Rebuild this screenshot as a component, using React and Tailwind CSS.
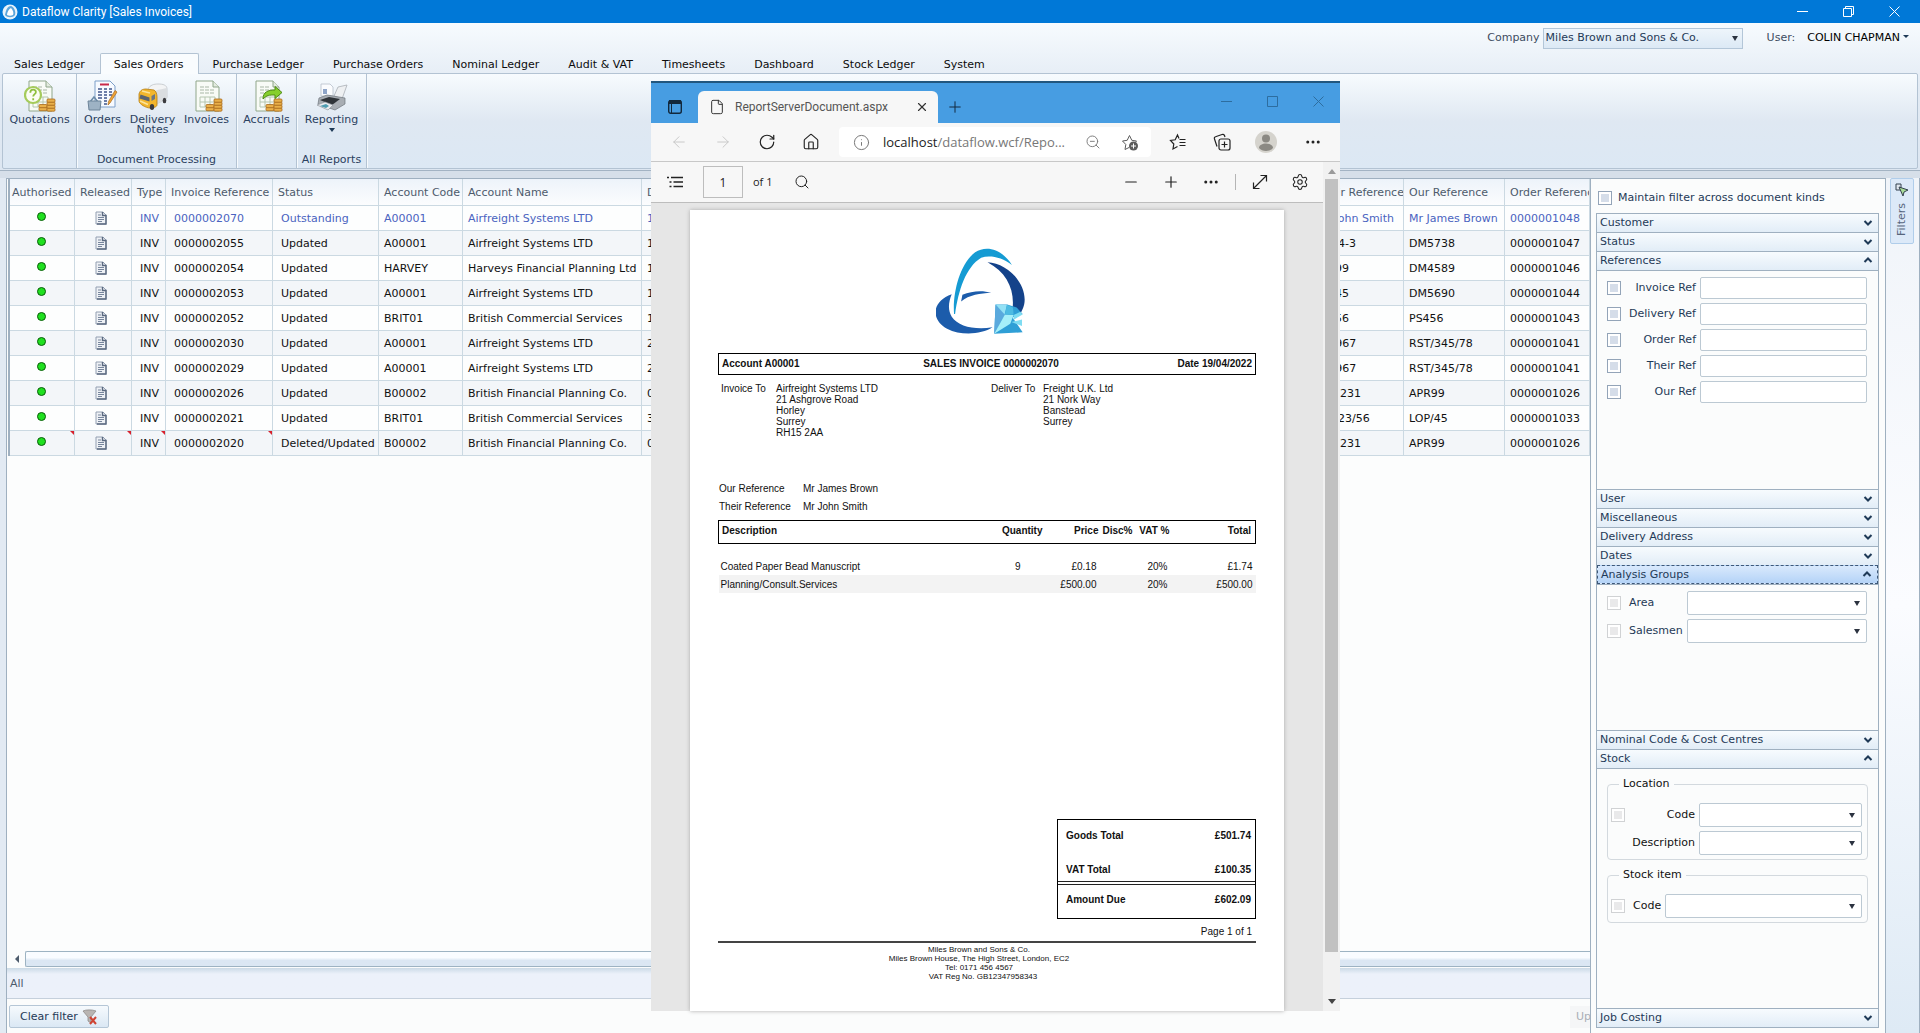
import { useState } from "react";
import {
  ArrowLeft,
  ArrowRight,
  RotateCw,
  House,
  Info,
  ZoomOut,
  Search,
  Minus,
  Plus,
  Settings,
  X,
  File,
  Ellipsis,
} from "lucide-react";

const tabs = [
  "Sales Ledger",
  "Sales Orders",
  "Purchase Ledger",
  "Purchase Orders",
  "Nominal Ledger",
  "Audit & VAT",
  "Timesheets",
  "Dashboard",
  "Stock Ledger",
  "System",
];

const invoices = [
  { ref: "0000002070", status: "Outstanding", code: "A00001", name: "Airfreight Systems LTD", date: "1", their: "Mr John Smith", our: "Mr James Brown", order: "0000001048" },
  { ref: "0000002055", status: "Updated", code: "A00001", name: "Airfreight Systems LTD", date: "1", their: "1244-3", our: "DM5738", order: "0000001047" },
  { ref: "0000002054", status: "Updated", code: "HARVEY", name: "Harveys Financial Planning Ltd", date: "1", their: "DM99", our: "DM4589", order: "0000001046" },
  { ref: "0000002053", status: "Updated", code: "A00001", name: "Airfreight Systems LTD", date: "1", their: "DM45", our: "DM5690", order: "0000001044" },
  { ref: "0000002052", status: "Updated", code: "BRIT01", name: "British Commercial Services", date: "1", their: "DM56", our: "PS456", order: "0000001043" },
  { ref: "0000002030", status: "Updated", code: "A00001", name: "Airfreight Systems LTD", date: "2", their: "RS/967", our: "RST/345/78", order: "0000001041" },
  { ref: "0000002029", status: "Updated", code: "A00001", name: "Airfreight Systems LTD", date: "2", their: "RS/967", our: "RST/345/78", order: "0000001041" },
  { ref: "0000002026", status: "Updated", code: "B00002", name: "British Financial Planning Co.", date: "0", their: "DR0231", our: "APR99", order: "0000001026" },
  { ref: "0000002021", status: "Updated", code: "BRIT01", name: "British Commercial Services", date: "3", their: "LOP23/56", our: "LOP/45", order: "0000001033" },
  { ref: "0000002020", status: "Deleted/Updated", code: "B00002", name: "British Financial Planning Co.", date: "0", their: "DR0231", our: "APR99", order: "0000001026", flagged: true },
];

/* ---------- icons ---------- */

function AppLogo() {
  return (
    <svg className="w-4 h-4" viewBox="0 0 16 16">
      <circle cx="8" cy="8" r="7.5" fill="#e8f3fb" />
      <path d="M3 11C4 5 6 2 9 2c3 1 5 5 4 9-2 3-8 3-10 0z" fill="#5aa5dc" />
      <path d="M5 11C5 8 7 5 9 4c2 2 3 5 2 7-2 1-4 1-6 0z" fill="#fff" />
    </svg>
  );
}

function Sheet() {
  return (
    <>
      <path d="M5 1h17l6 6v24H5z" fill="#f8fbf6" stroke="#8fa68a" />
      <path d="M22 1v6h6" fill="#e3ebdf" stroke="#8fa68a" />
      <path d="M9 7h9M9 10h14M9 13h15" stroke="#a9b7a6" strokeDasharray="4 1" />
      <path d="M9 17h15v10H9zM9 22h15M14 17v10M19 17v10" fill="none" stroke="#b5c6b0" />
    </>
  );
}

function Coins() {
  return (
    <g fill="#e9b04a" stroke="#a8691c" strokeWidth=".8">
      <rect x="15" y="27.5" width="8" height="3.2" rx="1" />
      <rect x="15" y="24.5" width="8" height="3.2" rx="1" />
      <rect x="23" y="28" width="8" height="3.2" rx="1" />
      <rect x="23" y="25" width="8" height="3.2" rx="1" />
      <rect x="23" y="22" width="8" height="3.2" rx="1" />
      <rect x="23" y="19" width="8" height="3.2" rx="1" />
    </g>
  );
}

function RibbonIcon({ kind }) {
  return (
    <svg className="w-8 h-8" viewBox="0 0 32 32">
      {kind === "quotations" && (
        <>
          <Sheet />
          <Coins />
          <circle cx="9" cy="15" r="8" fill="#fbfdf4" stroke="#a5cb5b" strokeWidth="2.2" />
          <path d="M6.3 12.8c0-4 5.600-4 5.600-.7 0 2-2.700 2.200-2.700 4.500M9.200 18.200v2" fill="none" stroke="#8fbf3f" strokeWidth="1.800" />
        </>
      )}
      {kind === "orders" && (
        <>
          <path d="M8 1h15l5 5v21H8z" fill="#f7faff" stroke="#7d9fc9" />
          <path d="M13 4.500h9" stroke="#c8284a" strokeWidth="2" />
          <path d="M11 9h4M11 12h4M11 15h4M11 18h4M17 9h3M17 12h3M17 15h3M17 18h3M17 21h3M17 24h3M22 9h3M22 12h3M22 15h3" stroke="#40558c" strokeWidth="1.500" />
          <path d="M30 12l-7 11-2 2 .5-3.500 6.500-11z" fill="#f0a436" stroke="#a86a20" strokeWidth=".7" />
          <path d="M3 22l4-5 4 5" fill="none" stroke="#6b8ba8" strokeWidth="1.500" />
          <path d="M1 21h13l-1 9H2z" fill="#9db2c4" stroke="#6d8499" />
        </>
      )}
      {kind === "delivery" && (
        <>
          <path d="M11 9c2-4 6-5 10-5 5 0 9 1 9 5v8c0 3-7 5-11 7l-8-8z" fill="#f3f4f5" stroke="#b9bdc1" strokeWidth=".7" />
          <path d="M18 11c4-2 9-2 12-3v9c0 3-7 5-11 7z" fill="#dadde0" />
          <path d="M2 14c1-4 4-5 7-5l8 1c2 1 3 4 3 7v8c0 2-4 3-7 3-4 0-11-4-11-7z" fill="#f3b62c" stroke="#b57c12" strokeWidth=".8" />
          <path d="M3.500 14.500l9 3v4l-10-3z" fill="#5b6470" />
          <path d="M14.500 16l3.500-2v5l-3.500 2z" fill="#6c7683" />
          <path d="M5 11l8 2" stroke="#fbe39a" strokeWidth="1.500" />
          <ellipse cx="15" cy="27" rx="2.200" ry="3" fill="#3b3b3f" />
          <ellipse cx="27.500" cy="20.500" rx="1.800" ry="2.800" fill="#3b3b3f" />
          <path d="M3 21l8 3.500" stroke="#fbe39a" strokeWidth="1.500" />
        </>
      )}
      {kind === "invoices" && (
        <>
          <Sheet />
          <Coins />
        </>
      )}
      {kind === "accruals" && (
        <>
          <Sheet />
          <Coins />
          <path d="M12 19c0-7 5-9 12-9V6.500l7 6-7 6V15c-6 0-8 0-12 4z" fill="#86cf2c" stroke="#4d8a14" />
        </>
      )}
      {kind === "reporting" && (
        <>
          <path d="M5 4h9l3 3v9H5z" fill="#fbfcfe" stroke="#b7bfca" strokeWidth=".8" />
          <path d="M7 9h4v5H7z" fill="#8fa5c8" />
          <path d="M22 7l9-2-5 14-8-3z" fill="#eef0f2" stroke="#a9aeb5" strokeWidth=".8" />
          <path d="M3 18l8-3 18 3v6l-10 6L2 24z" fill="#a8adb3" stroke="#6f757c" strokeWidth=".7" />
          <path d="M4 20l9-3 11 2-8 6z" fill="#2f3338" />
          <path d="M1 25l8-3 8 3-5 5z" fill="#e9ebee" stroke="#90969d" strokeWidth=".7" />
          <path d="M4 26l6-2 3 2-3 2z" fill="#4f9cb0" />
        </>
      )}
    </svg>
  );
}

function RowDocIcon() {
  return (
    <svg className="w-3 h-4 inline-block" viewBox="0 0 12 16">
      <path d="M1 2h7l3 3v9H1z" fill="#eef1f5" stroke="#93a0b2" />
      <path d="M7.500 2v3.500H11V14H2" fill="none" stroke="#5b6a80" strokeWidth="1.400" />
      <path d="M3 5h3M3 7.500h6M3 9.500h6M3 11.500h4" stroke="#76859c" />
    </svg>
  );
}

function CompanyMark() {
  return (
    <svg className="w-[89px] h-[86px]" viewBox="33 23 266 259" preserveAspectRatio="none">
      <path d="M87 222C82 160 104 70 150 36c32-22 78-12 110 38-30-24-66-30-92-22C122 80 100 150 90 222z" fill="#159bd3" />
      <path d="M187 66c52 2 110 52 111 112 0 20-8 34-16 48l-20-22c6-56-18-108-75-138z" fill="#14428a" />
      <path d="M80 162c-62 22-62 78-14 104 42 22 102 18 136-4-54 8-102-2-122-32-12-20-10-44 0-68z" fill="#1c5cab" />
      <path d="M112 164c28-12 60-14 86-6-32 2-66 6-90 26z" fill="#1c5cab" />
      <path d="M211 193l-4 88 85-4-30-45 30-10-18-20-28-9z" fill="#2f9fd6" />
      <path d="M211 193l28 30-32 58z" fill="#5aa9dd" />
      <path d="M211 193l34 2-7 28z" fill="#93e1f5" />
      <path d="M239 223l26 2-10 26-48 30z" fill="#a5eff9" />
      <path d="M245 194l18 8 2 22-26-1z" fill="#4dbbe2" />
      <path d="M265 225l20-10 7 8-27 16zM258 246l32-8v20z" fill="#7edcf2" />
    </svg>
  );
}

function Caret() {
  return <span className="border-x-[3px] border-x-transparent border-t-[5px] border-t-[#2c3340]" />;
}

/* ---------- small controls ---------- */

function Check({ id, disabled, label }) {
  return (
    <input
      id={id}
      type="checkbox"
      aria-label={label}
      disabled={disabled}
      className={
        "appearance-none w-[14px] h-[14px] shrink-0 border shadow-[inset_0_0_0_2px_white] checked:bg-[#5b86c4] " +
        (disabled ? "border-[#d0d2d4] bg-[#e9e9ea]" : "border-[#93a4b8] bg-[#d5dde9]")
      }
    />
  );
}

function Combo({ id, label, className }) {
  return (
    <div className={"relative flex items-center " + className}>
      <select
        id={id}
        aria-label={label}
        className="appearance-none w-full h-6 border border-[#bcc9d3] rounded-xs bg-white px-1"
      >
        <option></option>
      </select>
      <span className="absolute right-[7px] flex pointer-events-none">
        <Caret />
      </span>
    </div>
  );
}

function Section({ title, open, active, className = "", children }) {
  return (
    <div className={"flex flex-col " + className}>
      <button
        className={
          "flex items-center justify-between h-[19px] w-full shrink-0 pl-[3px] pr-[5px] text-left text-[#1f3a57] " +
          (active
            ? "border border-dashed border-[#3e5878] bg-linear-to-b from-[#d9e9fc] to-[#b4d3f7]"
            : "border-t border-[#9fb0c0] bg-linear-to-b from-[#f7fbfe] to-[#e2edf7]")
        }
      >
        {title}
        <svg className="w-[10px] h-[10px]" viewBox="0 0 10 10">
          <path d={open ? "M1.500 6L5 2.500 8.500 6" : "M1.500 3L5 6.500 8.500 3"} fill="none" stroke="#1f3a57" strokeWidth="2" />
        </svg>
      </button>
      {open && <div className="flex-1 border-t border-[#9fb0c0] bg-[#fbfcfc]">{children}</div>}
    </div>
  );
}

/* ---------- main window parts ---------- */

function TitleBar() {
  return (
    <div className="h-[23px] bg-[#0078d7] text-white flex items-center pl-[2px] pr-5 gap-1">
      <AppLogo />
      <h1 className="flex-1 text-[12px] font-[Roboto,sans-serif]">Dataflow Clarity [Sales Invoices]</h1>
      <div className="flex items-center gap-[35px]">
        <button aria-label="Minimise">
          <svg className="w-[11px] h-[11px]" viewBox="0 0 11 11"><path d="M0 5.500h11" stroke="#fff" /></svg>
        </button>
        <button aria-label="Restore">
          <svg className="w-[11px] h-[11px]" viewBox="0 0 11 11"><path d="M.5 2.500h8v8h-8zM2.500 2.500v-2h8v8h-2" fill="none" stroke="#fff" /></svg>
        </button>
        <button aria-label="Close">
          <svg className="w-[11px] h-[11px]" viewBox="0 0 11 11"><path d="M.5.5l10 10M10.500.5l-10 10" stroke="#fff" /></svg>
        </button>
      </div>
    </div>
  );
}

function RibbonButton({ kind, label, drop, className = "w-14" }) {
  return (
    <button className={"flex flex-col items-center leading-[10px] text-[#2b4160] " + className}>
      <RibbonIcon kind={kind} />
      <span className="pt-[3px]">{label}</span>
      {drop && <span className="mt-[3px] border-x-[3px] border-x-transparent border-t-4 border-t-[#1f3a57]" />}
    </button>
  );
}

function RibbonGroup({ caption, className, children }) {
  return (
    <div className={"flex flex-col items-center pt-[6px] border-r border-[#b3c3d3] shadow-[1px_0_0_#f6fafd] " + className}>
      <div className="flex-1 flex items-start justify-center">{children}</div>
      <span className="h-4 leading-4 whitespace-nowrap text-[#2b4160]">{caption}</span>
    </div>
  );
}

function Ribbon() {
  const [tab, setTab] = useState("Sales Orders");
  return (
    <header className="bg-linear-to-b from-[#f7fbfe] via-[#e3ebf4] via-40% to-[#dce6f1]">
      <div className="h-[30px] flex items-center justify-end pr-[11px]">
        <label htmlFor="company" className="text-[#3d4c61] pr-[3px]">Company</label>
        <div className="relative flex items-center w-[200px]">
          <select
            id="company"
            className="appearance-none w-full h-[21px] pl-[2px] border border-[#b3c6d8] text-[#1f3a57] bg-linear-to-b from-[#eef5fb] to-[#dce9f5]"
          >
            <option>Miles Brown and Sons &amp; Co.</option>
          </select>
          <span className="absolute right-[5px] flex pointer-events-none"><Caret /></span>
        </div>
        <span className="pl-6 text-[#3d4c61]">User:</span>
        <button className="pl-3 flex items-center gap-[3px] text-black">
          COLIN CHAPMAN
          <span className="border-x-[3px] border-x-transparent border-t-[3px] border-t-[#1f3a57] mb-1" />
        </button>
      </div>
      <nav className="h-5 flex">
        {tabs.map((t) => (
          <button
            key={t}
            onClick={() => setTab(t)}
            className={
              "pl-[13px] pr-[14px] pt-[2px] h-[21px] whitespace-nowrap text-[#0c0c0c] border-x border-t rounded-t-xs " +
              (t === tab ? "bg-[#f9fcfe] border-[#b3c3d3] relative" : "border-transparent")
            }
          >
            {t}
          </button>
        ))}
      </nav>
      <div className="h-24 ml-[2px] mr-[2px] flex border border-[#b3c3d3] rounded-xs bg-linear-to-b from-[#f7fbfe] via-[#dfe8f2] via-50% to-[#dce8f4]">
        <RibbonGroup className="w-[74px]">
          <RibbonButton kind="quotations" label="Quotations" className="w-[70px]" />
        </RibbonGroup>
        <RibbonGroup className="w-40" caption="Document Processing">
          <RibbonButton kind="orders" label="Orders" className="w-12" />
          <RibbonButton kind="delivery" label="Delivery Notes" className="w-[52px]" />
          <RibbonButton kind="invoices" label="Invoices" />
        </RibbonGroup>
        <RibbonGroup className="w-[60px]">
          <RibbonButton kind="accruals" label="Accruals" />
        </RibbonGroup>
        <RibbonGroup className="w-[70px]" caption="All Reports">
          <RibbonButton kind="reporting" label="Reporting" drop />
        </RibbonGroup>
      </div>
      <div className="h-2 mt-px border-t border-[#a3b3c3] bg-[#d6dfe9]" />
    </header>
  );
}

function Th({ className = "", children }) {
  return (
    <th className={"font-normal text-left whitespace-nowrap overflow-hidden pt-[2px] border-r border-b border-[#cbd9e2] " + className}>
      {children}
    </th>
  );
}

function Td({ className = "", flagged, children }) {
  return (
    <td className={"relative whitespace-nowrap overflow-hidden border-r border-b border-[#cbd9e2] " + className}>
      {children}
      {flagged && (
        <span className="absolute top-0 right-0 border-t-4 border-t-[#d8202c] border-l-4 border-l-transparent" />
      )}
    </td>
  );
}

function InvoiceGrid() {
  return (
    <table className="w-full table-fixed border-separate border-spacing-0 border-l-2 border-[#9fb0c0]">
      <colgroup>
        <col className="w-[65px]" />
        <col className="w-[57px]" />
        <col className="w-[34px]" />
        <col className="w-[107px]" />
        <col className="w-[106px]" />
        <col className="w-[84px]" />
        <col className="w-[179px]" />
        <col />
        <col className="w-[92px]" />
        <col className="w-[101px]" />
        <col className="w-[85px]" />
      </colgroup>
      <thead>
        <tr className="h-[27px] text-[#4d5b6c] bg-linear-to-b from-[#edf3fa] to-[#fcfdfe]">
          <Th className="pl-[2px]">Authorised</Th>
          <Th className="pl-[5px]">Released</Th>
          <Th className="pl-[5px]">Type</Th>
          <Th className="pl-[5px]">Invoice Reference</Th>
          <Th className="pl-[5px]">Status</Th>
          <Th className="pl-[5px]">Account Code</Th>
          <Th className="pl-[5px]">Account Name</Th>
          <Th className="pl-[5px]">Date</Th>
          <Th className="pl-[5px]">Their Reference</Th>
          <Th className="pl-[5px]">Our Reference</Th>
          <Th className="pl-[5px]">Order Reference</Th>
        </tr>
      </thead>
      <tbody>
        {invoices.map((inv, i) => (
          <tr
            key={inv.ref}
            className={
              "h-[25px] " +
              (i === 0 ? "text-[#4a63c0] " : "text-[#111] ") +
              (i % 2 ? "bg-[#f3f6f9]" : "bg-[#fdfefe]")
            }
          >
            <Td className="text-center pr-[2px]" flagged={inv.flagged}>
              <span className="inline-block w-[9px] h-[9px] rounded-full bg-[#1fe01f] border border-[#0a5c0a]" />
            </Td>
            <Td className="text-center align-middle pr-[5px]" flagged={inv.flagged}><RowDocIcon /></Td>
            <Td className="pt-[2px] pl-2" flagged={inv.flagged}>INV</Td>
            <Td className="pt-[2px] pl-2" flagged={inv.flagged}>{inv.ref}</Td>
            <Td className="pt-[2px] pl-2">{inv.status}</Td>
            <Td className="pt-[2px] pl-[5px]">{inv.code}</Td>
            <Td className="pt-[2px] pl-[5px]">{inv.name}</Td>
            <Td className="pt-[2px] pl-[5px]">{inv.date}</Td>
            <Td className="pt-[2px] pl-[5px]">{inv.their}</Td>
            <Td className="pt-[2px] pl-[5px]">{inv.our}</Td>
            <Td className="pt-[2px] pl-[5px]">{inv.order}</Td>
          </tr>
        ))}
      </tbody>
    </table>
  );
}

function ListArea() {
  return (
    <section className="flex-1 min-w-0 flex flex-col border-l border-t border-[#9fb0c0] bg-[#fbfcfc]">
      <div className="flex-1 pl-px bg-white/40">
        <InvoiceGrid />
      </div>
      <div className="flex h-[18px] items-center">
        <span className="ml-2 border-y-4 border-y-transparent border-r-4 border-r-[#4d5b6c]" />
        <div className="flex-1 ml-[6px] h-4 border border-r-0 border-[#9db3c2] rounded-l-xs bg-linear-to-b from-[#f9fcff] from-40% to-[#dbe7f3] to-60%" />
      </div>
      <div className="h-[31px] flex items-center pl-[3px] pt-[2px] border-b border-[#c5d0dc] text-[#4d5b6c] bg-linear-to-b from-[#cbdae6] to-[#ecf1fa] to-20%">
        All
      </div>
      <div className="h-[34px] pt-px flex items-center justify-between pl-[2px]">
        <button className="flex items-center gap-1 h-[23px] px-[10px] border border-[#b5c6d6] rounded-xs text-[#1f3a57] bg-linear-to-b from-[#f6fafd] to-[#dbe8f4]">
          Clear filter
          <svg className="w-4 h-4" viewBox="0 0 16 16">
            <path d="M1 2c3-1.500 9-1.500 13 0l-5 6v6l-3-2V8z" fill="#b9b5b2" stroke="#8e8a88" strokeWidth=".8" />
            <path d="M8 8l6 7M14 8l-6 7" stroke="#cf4433" strokeWidth="2" />
          </svg>
        </button>
        <button disabled className="w-5 h-[22px] pl-[6px] overflow-hidden text-left text-[#a9afb6] bg-[#f5f6f7]">
          Up
        </button>
      </div>
    </section>
  );
}

const refFields = ["Invoice Ref", "Delivery Ref", "Order Ref", "Their Ref", "Our Ref"];

function FilterPanel() {
  return (
    <aside className="w-[296px] shrink-0 flex flex-col pl-[5px] pr-[6px] pb-[5px] border-x border-t border-[#9fb0c0] bg-[#fbfcfc] text-[#1f3a57]">
      <label className="h-[34px] pt-[3px] flex items-center gap-[6px] pl-[2px]">
        <Check id="maintain" />
        Maintain filter across document kinds
      </label>
      <div className="flex-1 flex flex-col border-x border-b border-[#9fb0c0]">
        <Section title="Customer" />
        <Section title="Status" />
        <Section title="References" open className="h-[238px]">
          <div className="flex flex-col gap-1 pt-[6px] pl-[10px] pr-[11px]">
            {refFields.map((f) => (
              <div key={f} className="flex items-center">
                <Check label={"Use " + f} />
                <label htmlFor={f} className="w-[75px] text-right">{f}</label>
                <input id={f} type="text" className="flex-1 min-w-0 h-[22px] ml-1 px-1 border border-[#bcc9d3] rounded-xs bg-white" />
              </div>
            ))}
          </div>
        </Section>
        <Section title="User" />
        <Section title="Miscellaneous" />
        <Section title="Delivery Address" />
        <Section title="Dates" />
        <Section title="Analysis Groups" open active className="h-[165px]">
          <div className="flex flex-col gap-1 pt-[6px] pl-[10px] pr-[11px]">
            {["Area", "Salesmen"].map((f) => (
              <div key={f} className="flex items-center">
                <Check disabled label={"Use " + f} />
                <label htmlFor={f} className="w-[58px] ml-2">{f}</label>
                <Combo id={f} className="flex-1" />
              </div>
            ))}
          </div>
        </Section>
        <Section title="Nominal Code & Cost Centres" />
        <Section title="Stock" open className="flex-1">
          <div className="flex flex-col gap-2 pt-2 px-[10px] text-[#111]">
            <fieldset className="border border-[#d3d9de] rounded-sm pl-[3px] pr-[5px] pb-1">
              <legend className="ml-2 px-1">Location</legend>
              <div className="flex flex-col gap-1 pt-3">
                <div className="flex items-center">
                  <Check disabled label="Use location" />
                  <label htmlFor="loc-code" className="w-[70px] text-right">Code</label>
                  <Combo id="loc-code" className="flex-1 ml-1" />
                </div>
                <div className="flex items-center">
                  <label htmlFor="loc-desc" className="w-[84px] text-right">Description</label>
                  <Combo id="loc-desc" className="flex-1 ml-1" />
                </div>
              </div>
            </fieldset>
            <fieldset className="border border-[#d3d9de] rounded-sm pl-[3px] pr-[5px] pb-1">
              <legend className="ml-2 px-1">Stock item</legend>
              <div className="flex items-center pt-3">
                <Check disabled label="Use stock item" />
                <label htmlFor="item-code" className="ml-2">Code</label>
                <Combo id="item-code" className="flex-1 ml-1" />
              </div>
            </fieldset>
          </div>
        </Section>
        <Section title="Job Costing" />
      </div>
    </aside>
  );
}

function SideStrip() {
  return (
    <div className="w-[34px] shrink-0 flex justify-center items-start pr-[2px] border-r border-[#9fb0c0] bg-linear-to-b from-[#f0f4f9] via-[#fbfcff] via-50% to-[#deeaf5]">
      <button className="w-6 h-[66px] pt-1 flex flex-col items-center gap-[6px] border border-[#b0cdea] rounded-xs bg-[#dce9f8] text-[#56657c]">
        <svg className="w-[14px] h-[14px] shrink-0" viewBox="0 0 14 14">
          <path d="M1 1h5v6H1z" fill="#dfe6ee" stroke="#33404f" />
          <path d="M4 4l9 3-4 2-1 4z" fill="#a8dc98" stroke="#33404f" />
        </svg>
        <span className="[writing-mode:vertical-rl] rotate-180">Filters</span>
      </button>
    </div>
  );
}

/* ---------- report window ---------- */

function StarPlus() {
  return (
    <svg className="w-[18px] h-[18px]" viewBox="0 0 18 18" fill="none" stroke="#5c5c5c">
      <path d="M8 14.500l-4 2 .8-5L1.500 8l4.700-.7L8.500 2.500l2.300 4.800 4.700.7-1 1.200" />
      <circle cx="12.500" cy="13" r="4.500" fill="#5c5c5c" stroke="none" />
      <path d="M12.500 10.500v5M10 13h5" stroke="#fff" />
    </svg>
  );
}

function FavouritesIcon() {
  return (
    <svg className="w-[18px] h-[18px]" viewBox="0 0 18 18" fill="none" stroke="#222" strokeWidth="1.200">
      <path d="M10 5.500L8.500 2 6.200 6.800 1.500 7.500l3.300 3.500-.8 5 4.500-2.500M10.500 6.500h6M10.500 9.500h6M10.500 12.500h6" />
    </svg>
  );
}

function CollectionsIcon() {
  return (
    <svg className="w-[18px] h-[18px]" viewBox="0 0 18 18" fill="none" stroke="#222" strokeWidth="1.200">
      <rect x="6" y="6" width="11" height="11" rx="2" />
      <path d="M11.500 8.500v6M8.500 11.500h6M4 13.500L1.500 6c-.3-1 0-2 1-2.300L9 1.500c1-.3 2 0 2.500 1l.5 1.500" />
    </svg>
  );
}

function ContentsIcon() {
  return (
    <svg className="w-[18px] h-[18px]" viewBox="0 0 18 18" stroke="#222" strokeWidth="1.300">
      <path d="M1 4.500h2M5 4.500h12M3.500 9h2M7.500 9H17M3.500 13.500h2M7.500 13.500H17" />
    </svg>
  );
}

function ExpandIcon() {
  return (
    <svg className="w-[18px] h-[18px]" viewBox="0 0 18 18" fill="none" stroke="#222" strokeWidth="1.200">
      <path d="M2.500 15.500l13-13M9.500 2.500h6v6M2.500 9.500v6h6" />
    </svg>
  );
}

function BrowserChrome() {
  return (
    <>
      <div className="h-[42px] shrink-0 flex items-end border-t-2 border-[#22577f] bg-[#479de2]">
        <button aria-label="Tab actions" className="w-[47px] h-8 flex items-center justify-center">
          <svg className="w-[14px] h-[14px]" viewBox="0 0 14 14">
            <rect x=".7" y=".7" width="12.600" height="12.600" rx="2" fill="none" stroke="#12283c" strokeWidth="1.400" />
            <path d="M1 0h12v4H1z" fill="#12283c" />
            <path d="M3.500 4v9" stroke="#12283c" />
          </svg>
        </button>
        <div className="w-60 h-8 flex items-center pl-[11px] pr-[9px] rounded-t-md bg-[#f7f7f7] text-[#555]">
          <File size={16} strokeWidth={1.5} className="text-[#333]" />
          <span className="flex-1 pl-[10px] text-[12px] font-[Roboto,sans-serif]">ReportServerDocument.aspx</span>
          <button aria-label="Close tab"><X size={14} strokeWidth={2} className="text-[#333]" /></button>
        </div>
        <button aria-label="New tab" className="h-8 px-2"><Plus size={18} strokeWidth={1.3} className="text-[#12283c]" /></button>
        <div className="flex-1 flex justify-end items-center gap-[35px] h-10 pb-1 pr-4 text-[#2d6d9f]">
          <button aria-label="Minimise report"><svg className="w-[11px] h-[11px]" viewBox="0 0 11 11"><path d="M0 5.500h11" stroke="currentColor" /></svg></button>
          <button aria-label="Maximise report"><svg className="w-[11px] h-[11px]" viewBox="0 0 11 11"><path d="M.5.500h10v10H.500z" fill="none" stroke="currentColor" /></svg></button>
          <button aria-label="Close report"><svg className="w-[11px] h-[11px]" viewBox="0 0 11 11"><path d="M.5.5l10 10M10.500.5l-10 10" stroke="currentColor" /></svg></button>
        </div>
      </div>
      <div className="h-[38px] shrink-0 flex items-center bg-[#f7f7f7] text-[#222] pl-[19px] pr-[18px]">
        <button aria-label="Back" className="pr-[26px]"><ArrowLeft size={18} strokeWidth={1.2} className="text-[#c4c4c4]" /></button>
        <button aria-label="Forward" className="pr-[26px]"><ArrowRight size={18} strokeWidth={1.2} className="text-[#c4c4c4]" /></button>
        <button aria-label="Refresh" className="pr-[26px]"><RotateCw size={18} strokeWidth={1.6} /></button>
        <button aria-label="Home" className="pr-[19px]"><House size={18} strokeWidth={1.5} /></button>
        <div className="flex-1 h-[30px] flex items-center pl-[14px] pr-3 rounded-sm bg-white text-[#777]">
          <Info size={17} strokeWidth={1.4} />
          <span className="flex-1 pl-[13px] text-[13px] whitespace-nowrap"><span className="text-[#222]">localhost</span>/dataflow.wcf/Repo...</span>
          <ZoomOut size={16} strokeWidth={1.4} />
          <span className="pl-5"><StarPlus /></span>
        </div>
        <button aria-label="Favourites" className="pl-[18px]"><FavouritesIcon /></button>
        <button aria-label="Collections" className="pl-[26px]"><CollectionsIcon /></button>
        <button aria-label="Profile" className="pl-6">
          <svg className="w-[22px] h-[22px]" viewBox="0 0 22 22">
            <circle cx="11" cy="11" r="11" fill="#d5d3cd" />
            <circle cx="11" cy="7.500" r="4" fill="#8b8983" />
            <path d="M4 17c0-6 14-6 14 0-3 4-11 4-14 0z" fill="#8b8983" />
          </svg>
        </button>
        <button aria-label="Browser menu" className="pl-[27px]"><Ellipsis size={18} /></button>
      </div>
    </>
  );
}

function InvoicePage() {
  const rows = [
    ["Coated Paper Bead Manuscript", "9", "£0.18", "", "20%", "£1.74"],
    ["Planning/Consult.Services", "", "£500.00", "", "20%", "£500.00"],
  ];
  return (
    <article className="w-[594px] shrink-0 h-full px-7 bg-white shadow-[0_0_4px_#aaa] text-[10px] leading-[11px] text-[#111] font-['Liberation_Sans',Arial,sans-serif] flex flex-col overflow-hidden">
      <div className="pt-[38px] pl-[218px]"><CompanyMark /></div>
      <h2 className="mt-[19px] h-[22px] pb-px flex items-center justify-between px-[3px] border border-black font-bold">
        <span className="w-40">Account A00001</span>
        <span className="pl-2">SALES INVOICE 0000002070</span>
        <span className="w-40 text-right">Date 19/04/2022</span>
      </h2>
      <div className="flex mt-2 h-[94px]">
        <div className="w-[55px] pl-[3px]">Invoice To</div>
        <address className="not-italic w-[215px] pl-[3px]">
          Airfreight Systems LTD<br />21 Ashgrove Road<br />Horley<br />Surrey<br />RH15 2AA
        </address>
        <div className="w-[52px] pl-[3px]">Deliver To</div>
        <address className="not-italic pl-[3px]">
          Freight U.K. Ltd<br />21 Nork Way<br />Banstead<br />Surrey
        </address>
      </div>
      <dl className="grid grid-cols-[84px_1fr] gap-y-[7px] mt-[6px] pl-px">
        <dt>Our Reference</dt>
        <dd>Mr James Brown</dd>
        <dt>Their Reference</dt>
        <dd>Mr John Smith</dd>
      </dl>
      <table className="w-full table-fixed border-collapse mt-2">
        <colgroup>
          <col />
          <col className="w-[66px]" />
          <col className="w-[56px]" />
          <col className="w-[34px]" />
          <col className="w-[37px]" />
          <col className="w-[84px]" />
        </colgroup>
        <thead>
          <tr className="h-[23px] border border-black text-right whitespace-nowrap">
            <th className="text-left pl-[3px] pb-[3px]">Description</th>
            <th className="pr-[2px] pb-[3px]">Quantity</th>
            <th className="pr-[2px] pb-[3px]">Price</th>
            <th className="pr-[2px] pb-[3px]">Disc%</th>
            <th className="pr-[2px] pb-[3px]">VAT %</th>
            <th className="pr-1 pb-[3px]">Total</th>
          </tr>
        </thead>
        <tbody className="text-right before:block before:h-[13px]">
          {rows.map((r, i) => (
            <tr key={r[0]} className={"h-[18px] " + (i % 2 ? "bg-[#f3f3f3]" : "")}>
              <td className="text-left pl-[2px]">{r[0]}</td>
              <td className="pr-6">{r[1]}</td>
              <td className="pr-1">{r[2]}</td>
              <td>{r[3]}</td>
              <td className="pr-1">{r[4]}</td>
              <td className="pr-[3px]">{r[5]}</td>
            </tr>
          ))}
        </tbody>
      </table>
      <dl className="mt-[226px] ml-auto w-[199px] border border-black font-bold">
        <div className="flex justify-between pl-2 pr-1 pt-[10px]"><dt>Goods Total</dt><dd>£501.74</dd></div>
        <div className="flex justify-between pl-2 pr-1 pt-[23px] pb-[6px]"><dt>VAT Total</dt><dd>£100.35</dd></div>
        <div className="flex justify-between pl-2 pr-1 pt-[9px] pb-[13px] border-t-4 border-double border-[#222]"><dt>Amount Due</dt><dd>£602.09</dd></div>
      </dl>
      <div className="text-right pt-[7px] pr-1 pb-[4px] border-b-2 border-[#444]">Page 1 of 1</div>
      <footer className="pt-[2px] pr-4 text-center text-[8px] leading-[9px]">
        Miles Brown and Sons &amp; Co.<br />
        Miles Brown House, The High Street, London, EC2<br />
        Tel: 0171 456 4567<br />
        <span className="pl-2">VAT Reg No. GB12347958343</span>
      </footer>
    </article>
  );
}

function ReportWindow() {
  return (
    <div className="absolute left-[651px] top-[81px] w-[689px] h-[930px] flex flex-col bg-[#e6e6e6] font-['Open_Sans','Noto_Sans',sans-serif]">
      <BrowserChrome />
      <div className="flex-1 min-h-0 flex border-t border-[#c8c8c8]">
        <div className="flex-1 min-w-0 flex flex-col">
          <div className="h-[41px] shrink-0 flex items-center pl-[15px] pr-[14px] border-b border-[#bdbdbd] bg-[#f7f7f7] text-[#222] text-[12px]">
            <button aria-label="Contents"><ContentsIcon /></button>
            <input aria-label="Page number" defaultValue="1" className="w-10 h-8 ml-[19px] border border-[#bdbdbd] text-center bg-[#f7f7f7]" />
            <span className="pl-[10px] flex-1 text-[11px]">of 1</span>
            <div className="flex-[13] pl-4 flex items-center"><button aria-label="Find"><Search size={16} strokeWidth={1.5} /></button></div>
            <button aria-label="Zoom out" className="pr-[22px]"><Minus size={18} strokeWidth={1.6} /></button>
            <button aria-label="Zoom in" className="pr-[22px]"><Plus size={18} strokeWidth={1.6} /></button>
            <button aria-label="More"><Ellipsis size={18} /></button>
            <span className="w-px h-4 mx-[15px] bg-[#b5b5b5]" />
            <button aria-label="Full screen" className="pr-[22px]"><ExpandIcon /></button>
            <button aria-label="Settings"><Settings size={18} strokeWidth={1.4} /></button>
          </div>
          <div className="flex-1 min-h-0 flex justify-center pt-[7px]">
            <InvoicePage />
          </div>
        </div>
        <div className="w-[17px] flex flex-col items-center bg-[#f1f1f1] py-[7px]">
          <span className="border-x-4 border-x-transparent border-b-[5px] border-b-[#9a9a9a]" />
          <span className="mt-[5px] w-[13px] h-[773px] bg-[#c1c1c1]" />
          <span className="mt-auto border-x-4 border-x-transparent border-t-[5px] border-t-[#444]" />
        </div>
      </div>
    </div>
  );
}

export default function App() {
  return (
    <div className="relative min-h-screen flex flex-col overflow-hidden bg-[#e2eaf3] text-[11px] leading-[14px] font-['DejaVu_Sans',Verdana,sans-serif]">
      <TitleBar />
      <Ribbon />
      <main className="flex-1 flex pl-[6px]">
        <ListArea />
        <FilterPanel />
        <SideStrip />
      </main>
      <ReportWindow />
    </div>
  );
}
